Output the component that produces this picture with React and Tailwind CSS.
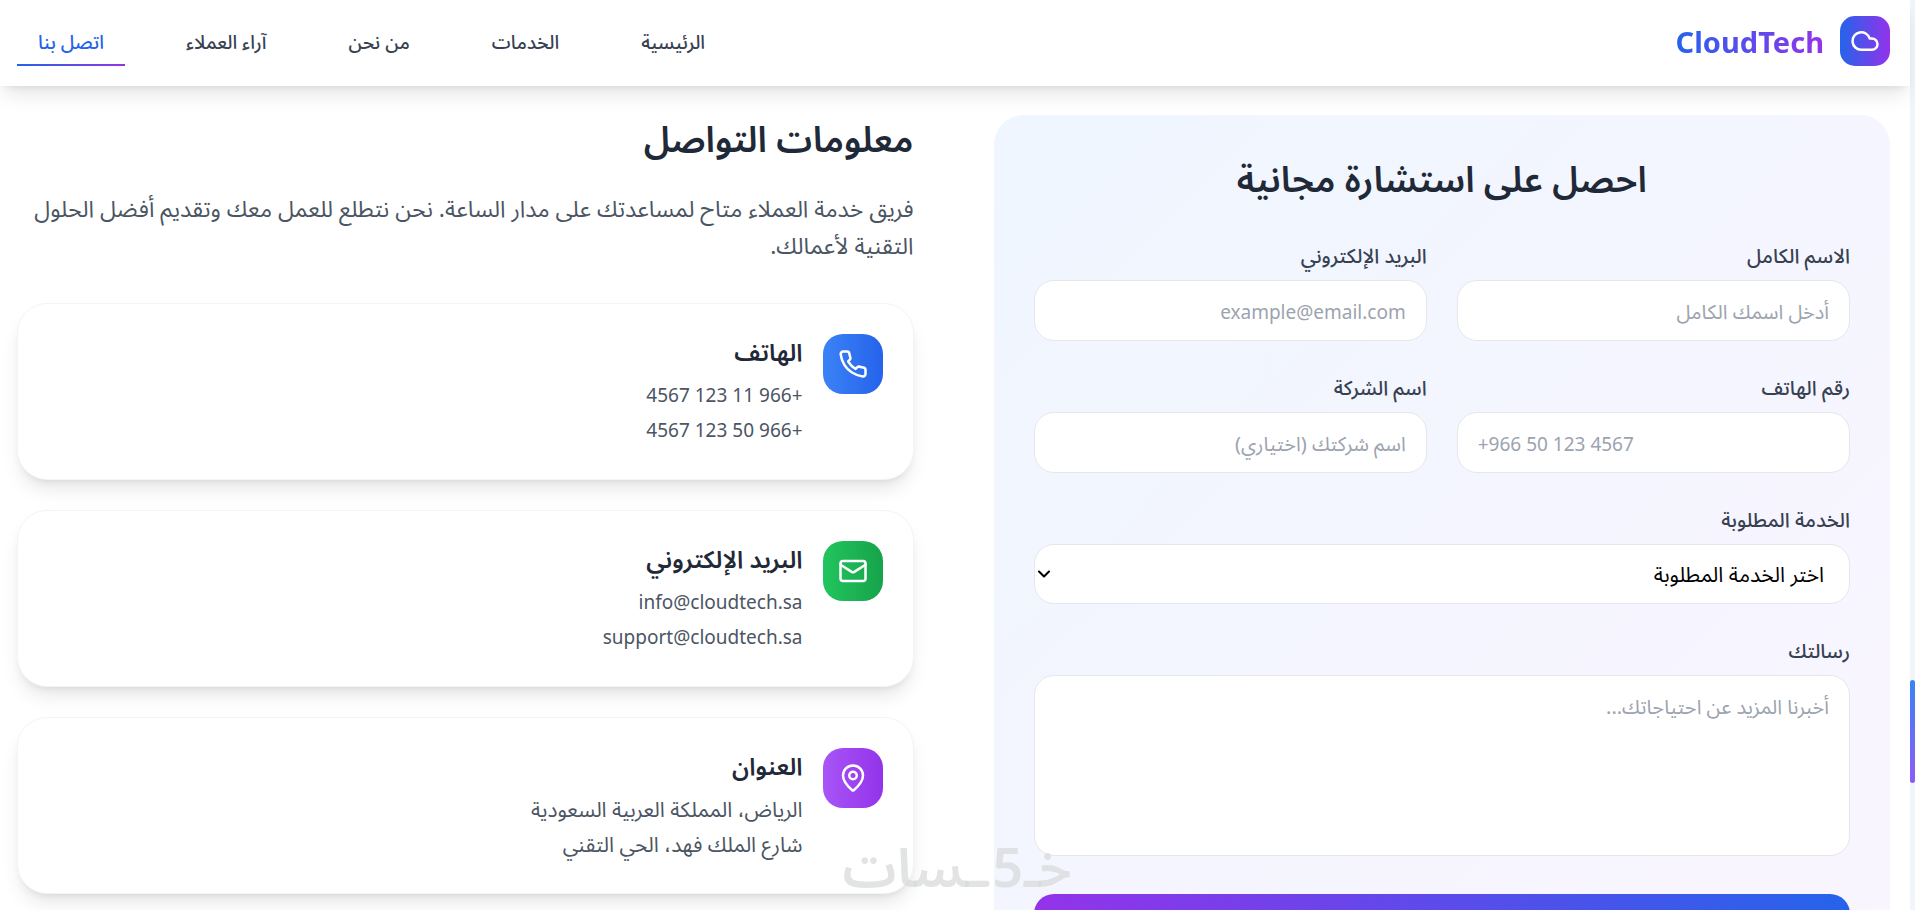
import React from "react";
import { Cloud, Mail, MapPin, ChevronDown } from "lucide-react";
import { FiPhone } from "react-icons/fi";

const navLinks = [
  { label: "الرئيسية", href: "#home" },
  { label: "الخدمات", href: "#services" },
  { label: "من نحن", href: "#about" },
  { label: "آراء العملاء", href: "#testimonials" },
  { label: "اتصل بنا", href: "#contact", active: true },
];

const contactCards = [
  {
    title: "الهاتف",
    lines: ["+966 11 123 4567", "+966 50 123 4567"],
    icon: FiPhone,
    color: "from-[#3b82f6] to-[#2563eb]",
    textSize: "text-[19px]/[35px]",
  },
  {
    title: "البريد الإلكتروني",
    lines: ["info@cloudtech.sa", "support@cloudtech.sa"],
    icon: Mail,
    color: "from-[#22c55e] to-[#16a34a]",
    textSize: "text-[19px]/[35px]",
  },
  {
    title: "العنوان",
    lines: ["الرياض، المملكة العربية السعودية", "شارع الملك فهد، الحي التقني"],
    icon: MapPin,
    color: "from-[#a855f7] to-[#9333ea]",
    textSize: "text-[21px]/[35px]",
  },
];

const services = ["الحوسبة السحابية", "الأمن السيبراني", "تطوير التطبيقات"];

const fieldClass =
  "block w-full rounded-[20px] border border-[#e5e7eb] bg-white px-5 text-black placeholder:text-[#9ca3af]";

function Field({ id, label, children }) {
  return (
    <div>
      <label htmlFor={id} className="mb-[9px] block text-xl/[31px] font-medium text-[#374151]">
        {label}
      </label>
      {children}
    </div>
  );
}

function Header() {
  return (
    <header className="relative z-10 mr-[5px] flex items-center justify-between bg-white pt-4 pr-5 pb-5 pl-[17px] shadow-[0_12px_19px_-4px_rgb(0_0_0/0.1),0_5px_8px_-5px_rgb(0_0_0/0.1)]">
      <div className="flex items-center gap-4">
        <div className="flex size-[50px] items-center justify-center rounded-[15px] bg-linear-to-r/srgb from-[#2563eb] to-[#9333ea]">
          <Cloud className="size-[30px] text-white" />
        </div>
        <span className="bg-linear-to-r/srgb from-[#2563eb] to-[#9333ea] bg-clip-text pt-[2px] text-[29px]/[40px] font-bold text-transparent">
          CloudTech
        </span>
      </div>

      <nav className="flex items-center gap-10">
        {navLinks.map((link) => (
          <a
            key={link.href}
            href={link.href}
            className={`relative px-[21px] pt-[11px] pb-[9px] text-[19px]/[30px] font-medium ${link.active ? "text-[#2563eb]" : "text-[#374151]"}`}
          >
            {link.label}
            {link.active && (
              <span className="absolute inset-x-0 bottom-0 h-[2px] bg-linear-to-r/srgb from-[#2563eb] to-[#9333ea]" />
            )}
          </a>
        ))}
      </nav>
    </header>
  );
}

function ContactForm() {
  return (
    <div className="rounded-[30px] bg-linear-to-br/srgb from-[#eff6ff] to-[#faf5ff] p-10">
      <h3 className="mb-[38px] text-center text-[36px]/[47px] font-semibold text-[#1f2937]">احصل على استشارة مجانية</h3>
      <form className="flex flex-col gap-[31px]">
        <div className="grid grid-cols-2 gap-x-[30px] gap-y-[31px]">
          <Field id="name" label="الاسم الكامل">
            <input id="name" type="text" placeholder="أدخل اسمك الكامل" className={`${fieldClass} h-[61px] pt-[2px] text-xl`} />
          </Field>
          <Field id="email" label="البريد الإلكتروني">
            <input id="email" type="email" placeholder="example@email.com" className={`${fieldClass} h-[61px] pt-[2px] text-[19px]`} />
          </Field>
          <Field id="phone" label="رقم الهاتف">
            <input id="phone" type="tel" dir="ltr" placeholder="+966 50 123 4567" className={`${fieldClass} h-[61px] pt-[2px] text-[19px]`} />
          </Field>
          <Field id="company" label="اسم الشركة">
            <input id="company" type="text" placeholder="اسم شركتك (اختياري)" className={`${fieldClass} h-[61px] pt-[2px] text-xl`} />
          </Field>
        </div>

        <Field id="service" label="الخدمة المطلوبة">
          <div className="relative">
            <select id="service" className={`${fieldClass} h-[60px] appearance-none pt-[2px] pr-[25px] text-[21px]`}>
              <option>اختر الخدمة المطلوبة</option>
              {services.map((s) => (
                <option key={s}>{s}</option>
              ))}
            </select>
            <ChevronDown strokeWidth={2.5} className="pointer-events-none absolute top-5 left-0 size-5 text-black" />
          </div>
        </Field>

        <Field id="message" label="رسالتك">
          <textarea
            id="message"
            placeholder="أخبرنا المزيد عن احتياجاتك..."
            className={`${fieldClass} mb-[7px] h-[181px] resize-none py-4 text-xl/[30px]`}
          />
        </Field>

        <button
          type="submit"
          aria-label="إرسال الطلب"
          className="h-[70px] rounded-[20px] bg-linear-to-l/srgb from-[#2563eb] to-[#9333ea]"
        />
      </form>
    </div>
  );
}

function ContactInfo() {
  return (
    <div>
      <h3 className="mb-7 text-[36px]/[47px] font-semibold text-[#1f2937]">معلومات التواصل</h3>
      <p className="mb-[39px] text-[23px]/[37px] text-[#4b5563]">
        فريق خدمة العملاء متاح لمساعدتك على مدار الساعة. نحن نتطلع للعمل معك وتقديم أفضل الحلول التقنية لأعمالك.
      </p>

      <div className="flex flex-col gap-[30px]">
        {contactCards.map((card) => (
          <div
            key={card.title}
            className="flex items-start gap-5 rounded-[30px] border border-[#f3f4f6] bg-white p-[30px] shadow-[0_12px_19px_-4px_rgb(0_0_0/0.1),0_5px_8px_-5px_rgb(0_0_0/0.1)]"
          >
            <div className={`flex size-[60px] items-center justify-center rounded-[20px] bg-linear-to-r/srgb text-white ${card.color}`}>
              <card.icon className="size-[30px]" />
            </div>
            <div className="pb-px">
              <h4 className="mb-[9px] text-2xl/[35px] font-semibold text-[#1f2937]">{card.title}</h4>
              {card.lines.map((line) => (
                <p key={line} className={`${card.textSize} text-[#4b5563]`}>
                  {line}
                </p>
              ))}
            </div>
          </div>
        ))}
      </div>
    </div>
  );
}

export default function App() {
  return (
    <div
      dir="rtl"
      className="relative h-screen overflow-hidden bg-white font-['Segoe_UI','Noto_Sans','Noto_Sans_Arabic','DejaVu_Sans',sans-serif]"
    >
      <Header />

      <main className="mr-[5px] grid grid-cols-2 items-start gap-20 pt-[29px] pr-5 pl-[17px]">
        <ContactForm />
        <ContactInfo />
      </main>

      {/* Marca de agua */}
      <div
        aria-label="خمسات"
        className="pointer-events-none absolute bottom-1 left-[842px] flex w-[230px] justify-center text-[54px]/[80px] font-semibold text-[#d5d9d8]/70"
      >
        خـ5ـسات
      </div>

      {/* Barra de desplazamiento */}
      <div className="absolute inset-y-0 right-0 w-[5px] bg-[#f1f5f9]">
        <div className="mt-[680px] h-[103px] rounded-[5px] bg-linear-to-b/srgb from-[#3b82f6] to-[#8b5cf6]" />
      </div>
    </div>
  );
}
